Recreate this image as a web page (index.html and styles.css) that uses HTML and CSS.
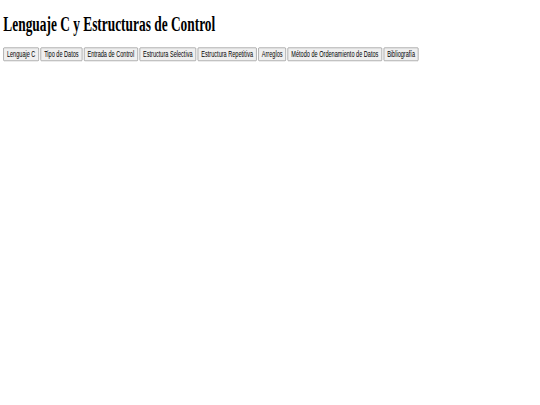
FILE: index.html
```html
<!DOCTYPE html>
<html lang="es">
<head>
<meta charset="utf-8">
<title>Lenguaje C y Estructuras de Control</title>
<link rel="stylesheet" href="styles.css">
</head>
<body>
<div class="viewport">
  <div class="page">
    <h1 class="title">Lenguaje C y Estructuras de Control</h1>
    <nav class="menu">
      <button class="tab">Lenguaje C</button>
      <button class="tab">Tipo de Datos</button>
      <button class="tab">Entrada de Control</button>
      <button class="tab">Estructura Selectiva</button>
      <button class="tab">Estructura Repetitiva</button>
      <button class="tab">Arreglos</button>
      <button class="tab">Método de Ordenamiento de Datos</button>
      <button class="tab">Bibliografía</button>
    </nav>
  </div>
</div>
</body>
</html>
```

FILE: styles.css
```css
html, body {
  margin: 0;
  padding: 0;
  background: #ffffff;
  overflow: hidden;
}

.viewport {
  width: 540px;
  height: 405px;
  overflow: hidden;
}

.page {
  width: 1292px;
  height: 620px;
  padding: 8px;
  box-sizing: border-box;
  transform: scale(0.418, 0.65);
  transform-origin: 0 0;
  font-family: "Liberation Serif", "Times New Roman", serif;
  font-size: 16px;
  color: #000;
}

.title {
  font-family: "Liberation Serif", "Times New Roman", serif;
  font-size: 32px;
  font-weight: bold;
  margin: 10px 0 18px;
  line-height: 37px;
}

.menu {
  display: block;
}

.tab {
  font-family: "Liberation Sans", Arial, sans-serif;
  font-size: 13.333px;
  padding: 1px 7.5px;
  margin: 0;
  color: #000;
  background: #efefef;
  border: 1px solid #767676;
  border-radius: 2px;
  line-height: 17px;
  height: 21px;
}
```
